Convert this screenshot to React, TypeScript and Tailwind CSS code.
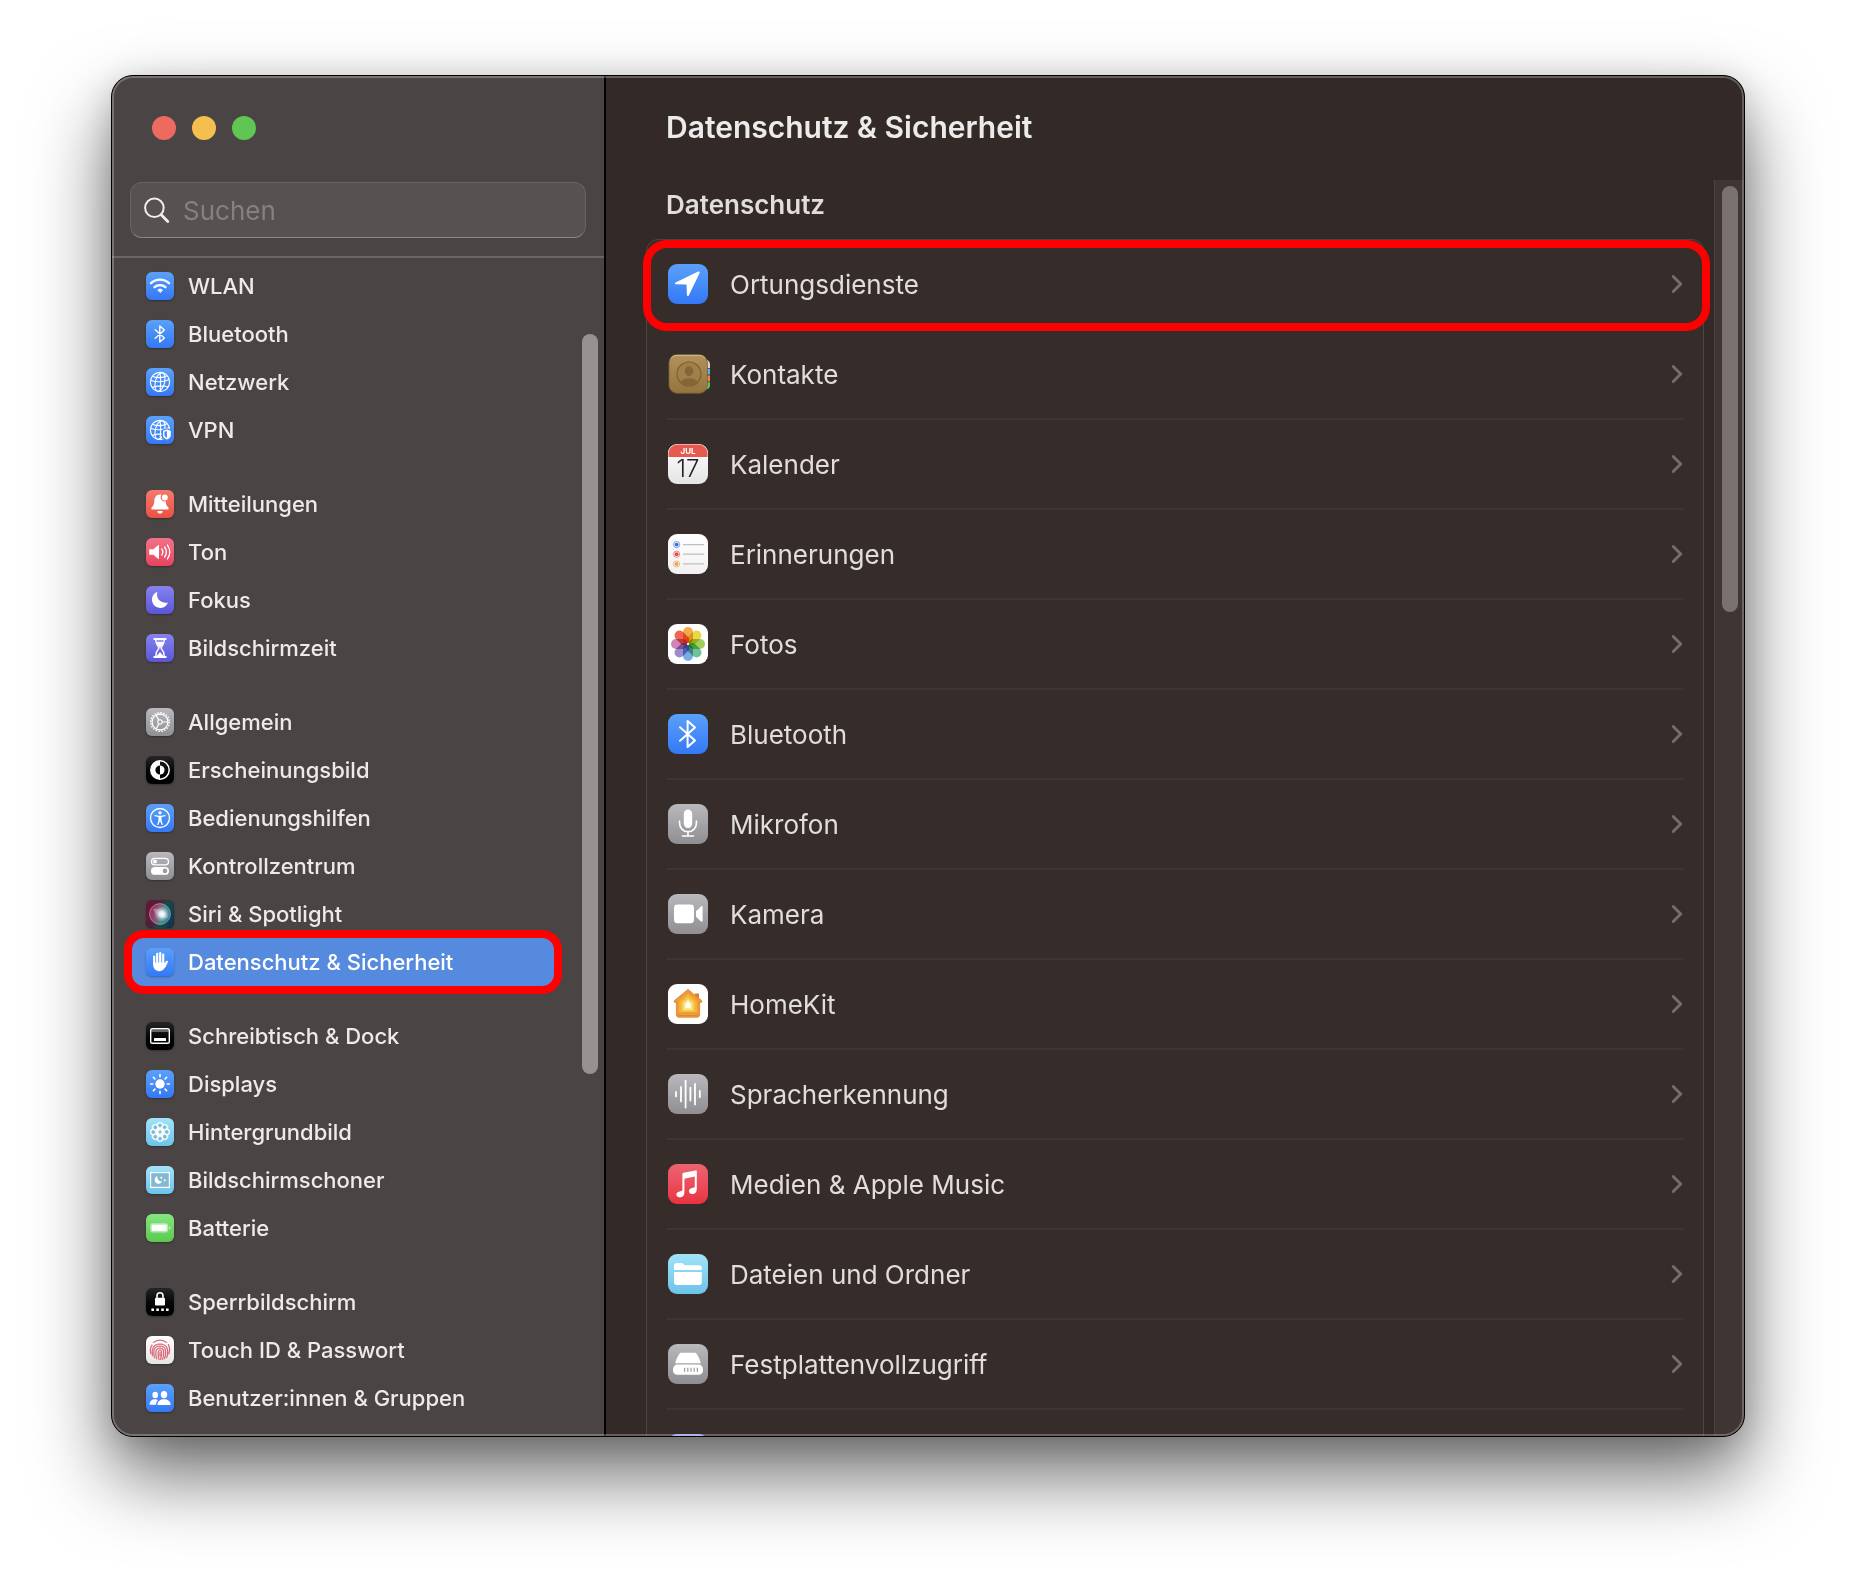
import React from 'react';
import { ChevronRight } from 'lucide-react';

const blue = 'from-[#5ba0f8] to-[#3478f6]';
const gray = 'from-[#b9b9bd] to-[#8e8e93]';
const black = 'from-[#262626] to-[#000000]';
const indigo = 'from-[#8783ee] to-[#5a56d8]';
const cyan = 'from-[#a0e4f8] to-[#6cc3ea]';
const white = 'from-[#ffffff] to-[#e4e4e4]';

const Bluetooth = () => (
  <path d="M9.2 9.8 18.4 18 13.8 22V6l4.6 4L9.2 18.2" fill="none" stroke="#fff" strokeWidth="1.4" strokeLinejoin="round" strokeLinecap="round" />
);

const Globe = () => (
  <g fill="none" stroke="#fff" strokeWidth="1.1">
    <circle cx="14" cy="14" r="9.6" />
    <ellipse cx="14" cy="14" rx="4.6" ry="9.6" transform="rotate(14 14 14)" />
    <path d="M14 4.4c1 6 1 13 0 19.2M4.6 12.2c5 2.4 14 2 18.6-.6M6.4 8.2c4 2 11 2 14.4-.4M6 19.4c4.4-2 12-2 16-.4" />
  </g>
);

/* Glyphs are drawn on a 28x28 grid */
const glyphs: Record<string, React.ReactNode> = {
  wifi: (
    <g fill="none" stroke="#fff" strokeWidth="2.4" strokeLinecap="round">
      <path d="M5 11.2a13 13 0 0 1 18 0M8.6 15.2a8 8 0 0 1 10.8 0" />
      <path d="M14 20.2l-2.2-2.2a3.2 3.2 0 0 1 4.4 0z" fill="#fff" strokeWidth="1" strokeLinejoin="round" />
    </g>
  ),
  bluetooth: <Bluetooth />,
  globe: <Globe />,
  vpn: (
    <g>
      <Globe />
      <path d="M16.4 14.4 20.8 12.8 25.4 14.4v4.6c0 2.6-2 4.2-4.6 5.2-2.6-1-4.4-2.6-4.4-5.2z" fill="#fff" stroke="#4285f6" strokeWidth="1.2" />
      <path d="M20.9 15v7c-1.6-.8-2.4-1.8-2.4-3.2v-3z" fill="#4285f6" />
    </g>
  ),
  bell: (
    <g>
      <path d="M14 4.4c-3.6 0-5.4 2.8-5.6 6-.2 3.4-.8 5.4-2.8 7.2-.6.8-.2 2 .8 2h15.2c1 0 1.4-1.2.8-2-2-1.8-2.6-3.8-2.8-7.2-.2-3.2-2-6-5.6-6z" fill="#fff" />
      <path d="M11.4 21h5.2a2.6 2.6 0 0 1-5.2 0z" fill="#fff" />
      <circle cx="18.8" cy="7.4" r="3.6" fill="#fff" stroke="#f2685a" strokeWidth="1.2" />
    </g>
  ),
  sound: (
    <g>
      <path d="M3.8 11.2h3.6L12 7.2c.6-.4 1 0 1 .6v12.4c0 .6-.4 1-1 .6l-4.6-4H3.8a.6.6 0 0 1-.6-.6v-4.4a.6.6 0 0 1 .6-.6z" fill="#fff" />
      <path d="M15.8 11a5 5 0 0 1 0 6M18.6 9a8.6 8.6 0 0 1 0 10M21.4 7a12.4 12.4 0 0 1 0 14" fill="none" stroke="#fff" strokeWidth="1.3" strokeLinecap="round" />
    </g>
  ),
  moon: <path d="M11.4 5.8c-1.8 6.8 3 12 10.6 10.8a8.3 8.3 0 1 1-10.600-10.800z" fill="#fff" />,
  hourglass: (
    <g>
      <path d="M8.2 5h11.6M8.2 23h11.6" stroke="#fff" strokeWidth="1.8" strokeLinecap="round" />
      <path d="M9.6 5.6h8.8c0 4-1.4 6-3.4 8.4 2 2.4 3.4 4.6 3.4 8.4H9.6c0-3.8 1.4-6 3.4-8.4-2-2.4-3.4-4.4-3.4-8.4z" fill="none" stroke="#fff" strokeWidth="1.3" />
      <path d="M10.4 7.8h7.2c-.4 2.2-1.6 4-3.6 6.200-2-2.200-3.200-4-3.600-6.200zM10.600 22l3.400-4 3.400 4z" fill="#fff" />
    </g>
  ),
  gear: (
    <g fill="none" stroke="#fff">
      <circle cx="14" cy="14" r="9.4" strokeWidth="1.4" strokeDasharray="1.5 1.45" />
      <circle cx="14" cy="14" r="8" strokeWidth="1.3" />
      <circle cx="14" cy="14" r="2.2" strokeWidth="1.1" />
      <path d="M16.2 14H22M12.9 12.1 10 7M12.9 15.9 10 21" strokeWidth="1.2" />
    </g>
  ),
  contrast: (
    <g>
      <circle cx="14" cy="14" r="9.2" fill="none" stroke="#fff" strokeWidth="1.5" />
      <path d="M14 4.8a9.2 9.2 0 0 0 0 18.4v-4.6a4.6 4.6 0 0 1 0-9.2z" fill="#fff" />
      <path d="M14 9.4a4.6 4.6 0 0 1 0 9.2z" fill="#fff" />
    </g>
  ),
  access: (
    <g>
      <circle cx="14" cy="14" r="9.5" fill="none" stroke="#fff" strokeWidth="1.3" />
      <circle cx="14" cy="8.8" r="1.6" fill="#fff" />
      <path d="M9 11.6 12.7 12.3h2.6L19 11.6" fill="none" stroke="#fff" strokeWidth="1.2" strokeLinecap="round" strokeLinejoin="round" />
      <path d="M12.5 12h3v4.200l1.400 4.800h-1.200L14 16.800 12.300 21h-1.200l1.400-4.800z" fill="#fff" />
    </g>
  ),
  toggles: (
    <g>
      <rect x="5.5" y="6.3" width="17" height="6.6" rx="3.3" fill="none" stroke="#fff" strokeWidth="1.3" />
      <circle cx="9" cy="9.6" r="2" fill="#fff" />
      <rect x="5" y="15" width="18" height="7.8" rx="3.9" fill="#fff" />
      <circle cx="19" cy="18.9" r="2.3" fill="#9b9b9f" />
    </g>
  ),
  siri: (
    <g>
      <defs>
        <radialGradient id="siriCore" cx="0.6" cy="0.5" r="0.42">
          <stop offset="0" stopColor="#ffffff" />
          <stop offset="0.3" stopColor="#eef6f6" stopOpacity="0.9" />
          <stop offset="1" stopColor="#8fb8c0" stopOpacity="0" />
        </radialGradient>
        <linearGradient id="siriBack" x1="0" y1="0.3" x2="1" y2="0.7">
          <stop offset="0" stopColor="#6c1232" />
          <stop offset="0.4" stopColor="#4a2340" />
          <stop offset="0.6" stopColor="#1c4a48" />
          <stop offset="1" stopColor="#123452" />
        </linearGradient>
        <linearGradient id="siriOrb" x1="0" y1="0.4" x2="1" y2="0.7">
          <stop offset="0" stopColor="#c02a62" />
          <stop offset="0.4" stopColor="#a5678a" />
          <stop offset="0.65" stopColor="#4ba59c" />
          <stop offset="1" stopColor="#2a7ad0" />
        </linearGradient>
      </defs>
      <rect width="28" height="28" rx="6" fill="url(#siriBack)" />
      <circle cx="14" cy="14" r="10.4" fill="url(#siriOrb)" fillOpacity="0.75" stroke="#93a4a8" strokeWidth="0.8" />
      <path d="M7 9c5-1 11 1 15 8-5 3-11 0-15-8z" fill="#fff" opacity="0.3" />
      <circle cx="14" cy="14" r="10" fill="url(#siriCore)" />
    </g>
  ),
  hand: (
    <g fill="none" stroke="#fff" strokeLinecap="round">
      <path d="M8.200 8.600v8M11.200 5.800v9M14.200 5v10M17.200 6.600v9" strokeWidth="2.200" />
      <path d="M20.800 13.800 18.400 18.800" strokeWidth="2.200" />
      <path d="M7.200 14.400h10.800l2 2.200c-1.200 3.800-2.800 6.600-6.600 6.600-4.200 0-6.200-2.800-6.200-6.600z" fill="#fff" stroke="none" />
    </g>
  ),
  dock: (
    <g>
      <rect x="4.7" y="6.7" width="18.6" height="14.6" rx="1.6" fill="none" stroke="#fff" strokeWidth="1.4" />
      <path d="M5 9h18" stroke="#bbb" strokeWidth="1" />
      <rect x="8" y="16" width="12" height="3" rx="0.6" fill="#fff" />
    </g>
  ),
  sun: (
    <g>
      <circle cx="14" cy="14" r="4.7" fill="#fff" />
      <path d="M14 4.6v2.2M14 21.2v2.2M4.6 14h2.2M21.2 14h2.2M7.4 7.4l1.5 1.5M19.1 19.1l1.5 1.5M7.4 20.6l1.5-1.5M19.1 8.9l1.5-1.5" stroke="#fff" strokeWidth="1.6" strokeLinecap="round" />
    </g>
  ),
  flower: (
    <g>
      {[0, 45, 90, 135, 180, 225, 270, 315].map((a) => (
        <circle key={a} cx="14" cy="7.4" r="2.7" fill="#7fb9d0" stroke="#fff" strokeWidth="1.5" transform={`rotate(${a} 14 14)`} opacity="0.85" />
      ))}
      <circle cx="14" cy="14" r="4.6" fill="#fff" opacity="0.85" />
      <circle cx="14" cy="14" r="1.4" fill="#7fb9d0" />
    </g>
  ),
  saver: (
    <g>
      <rect x="4.6" y="6.6" width="18.8" height="14.8" fill="#82b9d2" stroke="#fff" strokeWidth="1.2" />
      <path d="M11.4 10a4 4 0 1 0 4.8 5.6 4.6 4.6 0 0 1-4.800-5.600zM15.200 10l.5 1.200 1.200.5-1.200.5-.5 1.200-.5-1.200-1.200-.5 1.200-.5zM18.800 12.600l.5 1.200 1.200.5-1.200.5-.5 1.200-.5-1.200-1.200-.5 1.200-.5z" fill="#fff" />
    </g>
  ),
  battery: (
    <g>
      <rect x="4.2" y="9.2" width="18" height="9.2" rx="2.4" fill="#fff" opacity="0.5" />
      <rect x="5.8" y="10.8" width="14.8" height="6" rx="1.2" fill="#fff" />
      <path d="M23.2 12.2c2 .6 2 2.800 0 3.400z" fill="#fff" opacity="0.6" />
    </g>
  ),
  lock: (
    <g>
      <rect x="9" y="9.8" width="10" height="7.8" rx="1.4" fill="#fff" />
      <path d="M11 10V7.8a3 3 0 0 1 6 0V10" fill="none" stroke="#fff" strokeWidth="1.6" />
      <path d="M5.4 20.4h2.6v2.6H5.4zM10.3 20.4h2.6v2.6h-2.6zM15.2 20.4h2.6v2.6h-2.6zM20 20.4h2.6v2.6H20z" fill="#fff" />
    </g>
  ),
  touch: (
    <g fill="none" stroke="#dc6577" strokeWidth="1.2" strokeLinecap="round">
      <path d="M7.4 6.400a10.400 10.400 0 0 1 13.200 0M4.800 17.600c-.8-3.200-.4-6 1.200-8.400M22.400 8.600c1.600 3 1.400 6.400.6 9.200M6.400 19.600c-1-5.600.4-11.400 7.600-11.600 6.600 0 8.600 5 7.400 11.400-.2 1-.6 1.600-1 2.200M8.400 21.600c-1.600-6-.8-11.400 5.600-11.600 5.400 0 6.400 4.800 5.400 9.600-.2 1.200-.6 2.200-1.200 3.200M10.600 22.800c-1.200-4-2-10.600 3.400-10.800 4 0 4.200 4.200 3.400 8-.2 1.200-.6 2.400-1.200 3.400M13 23.600c-.8-2.600-1.800-9.400 1-9.600 2.400 0 1.800 5.400.4 9.400M14 16.400v3.600" />
    </g>
  ),
  users: (
    <g fill="#fff">
      <ellipse cx="9.2" cy="11" rx="2.8" ry="3.2" />
      <path d="M3.6 20.6c0-3.4 2.4-5.4 5.4-5.4 1.2 0 2.2.2 3 .8-1.2 1.2-1.8 2.600-1.900 4.800H4.400c-.6 0-.8 0-.8-.2z" />
      <ellipse cx="18" cy="10.6" rx="3.2" ry="3.6" />
      <path d="M11.4 20.6c0-3.4 3-5.4 6.6-5.4s6.6 2 6.6 5.4c0 .2-.2.4-.6.4H12c-.4 0-.6-.2-.6-.4z" />
    </g>
  ),
};

/* Glyphs of the privacy list are drawn on a 40x40 grid */
const bigGlyphs: Record<string, React.ReactNode> = {
  location: <path d="M30.2 7.6 7.6 18.4c-1 .6-.8 1.8.4 1.9l10 .3c.4 0 .6.2.6.6l.3 9.8c0 1.2 1.3 1.4 1.9.4L31.6 9c.5-1-.4-1.9-1.400-1.400z" fill="#fff" />,
  contacts: (
    <g>
      <defs>
        <linearGradient id="leather" x1="0" y1="0" x2="0" y2="1">
          <stop offset="0" stopColor="#b2915a" />
          <stop offset="1" stopColor="#94743f" />
        </linearGradient>
      </defs>
      <path d="M36 5.4c4 0 6 2 6 5V14H36z" fill="#d8d4cf" />
      <path d="M36 14.6h6v6H36z" fill="#5aaee8" />
      <path d="M36 21.4h6v6H36z" fill="#ee8a35" />
      <path d="M36 28.2h6v3.6c0 2-2 4-6 4.4z" fill="#62c466" />
      <rect x="1" y="0.8" width="38.4" height="38.4" rx="8" fill="url(#leather)" stroke="#7a6038" strokeWidth="0.8" />
      <path d="M3 4.4c1.200-2 3.200-3 6-3h22c2.800 0 4.800 1 6 3" fill="none" stroke="#d6bd8d" strokeWidth="1" />
      <circle cx="21" cy="20" r="12" fill="#a17f49" stroke="#7d6034" strokeWidth="1.2" />
      <ellipse cx="21" cy="17.2" rx="4.2" ry="5" fill="#856538" />
      <path d="M12.4 28.2c1.6-3 4.8-4 8.600-4s7 1 8.600 4c-4.600 5-12.600 5-17.200 0z" fill="#856538" />
    </g>
  ),
  calendar: (
    <g>
      <path d="M.5 13V9.500a9 9 0 0 1 9-9h21a9 9 0 0 1 9 9V13z" fill="#e5594f" />
      <text x="20" y="10" textAnchor="middle" fontSize="8" fontWeight="700" fill="#fff">JUL</text>
      <text x="20" y="33" textAnchor="middle" fontSize="24" fontWeight="300" fill="#222">17</text>
    </g>
  ),
  reminders: (
    <g>
      <path d="M15 10.6h21M15 20.2h21M15 29.9h21" stroke="#bfbfc2" strokeWidth="1.2" />
      {[['#2f6fe4', 10.6], ['#e04a3f', 20.2], ['#eba04d', 29.9]].map(([c, y]) => (
        <g key={c}>
          <circle cx="8.6" cy={y} r="3.1" fill="none" stroke={c as string} strokeWidth="0.9" opacity="0.7" />
          <circle cx="8.6" cy={y} r="1.9" fill={c as string} />
        </g>
      ))}
    </g>
  ),
  photos: (
    <g>
      {['#f39a2d', '#e6d329', '#8fc740', '#58b788', '#5e9fe0', '#8c77c6', '#c66fae', '#ea4f38'].map((c, i) => (
        <rect key={c} x="15" y="3" width="10" height="16.4" rx="5" fill={c} opacity="0.85" style={{ mixBlendMode: 'multiply' }} transform={`rotate(${i * 45} 20 20)`} />
      ))}
      <circle cx="20" cy="20" r="1" fill="#fff" />
    </g>
  ),
  bluetooth: <path d="M12 13.2 27 26.4 19.6 33V7L27 13.6 12 26.8" fill="none" stroke="#fff" strokeWidth="2" strokeLinejoin="round" strokeLinecap="round" />,
  mic: (
    <g>
      <rect x="15.8" y="5.6" width="8.4" height="18.4" rx="4.2" fill="#fff" />
      <path d="M11.6 17v2.4a8.4 8.4 0 0 0 16.8 0V17M20 27.8v4M14.4 32h11.2" fill="none" stroke="#fff" strokeWidth="1.6" strokeLinecap="round" />
    </g>
  ),
  camera: (
    <g fill="#fff">
      <rect x="6" y="10.6" width="20" height="18.6" rx="3.4" />
      <path d="M28 17.2 33 12.4c.8-.6 1.6-.2 1.6.6v13.800c0 .8-.8 1.200-1.600.6L28 22.800z" />
    </g>
  ),
  home: (
    <g>
      <path d="M27 9.6h4V16l-4-3.4z" fill="#d9822b" />
      <path d="M20 5.4 33.6 16.6c1 .8.2 1.800-.8 1.800H31.600V31c0 1.400-.8 2.200-2.200 2.200H10.600c-1.400 0-2.200-.8-2.200-2.200V18.400H7.200c-1 0-1.800-1-.8-1.800z" fill="#ee9a38" stroke="#d9822b" strokeWidth="0.8" />
      <path d="M20 9.4 29 17v13.2H11V17z" fill="#f3b03c" />
      <path d="M20 12.4 26.6 18v9.8H13.4V18z" fill="#f6cb48" />
      <path d="M20 15 24.6 19v7h-9.2v-7z" fill="#fae588" />
      <path d="M20 17.6 22.6 20v3.8h-5.2V20z" fill="#fff" />
      <path d="M10.6 29h18.8M9.6 31.4h20.8" stroke="#d9822b" strokeWidth="0.7" />
    </g>
  ),
  wave: <path d="M8 18v4.4M13 13v14.4M17.6 6.6v27M22.4 13.6v13M27 10v20.6M31.8 17v6" stroke="#fff" strokeWidth="1.8" strokeLinecap="round" />,
  music: (
    <g fill="#fff">
      <path d="M14.4 10.400c0-.8.4-1.400 1.200-1.600l12-2.400c.8-.2 1.200.2 1.200 1v17c0 4.400-2.400 5.600-4.600 5.600-2 0-3.200-1.200-3.200-2.800 0-1.800 1.200-2.800 3-3.200l1.800-.4c.8-.2 1-.6 1-1.200V12.600l-10.400 2.200v13c0 4-2 5.600-4.600 5.600-2.200 0-3.400-1.200-3.400-2.800 0-1.800 1.200-2.800 3.200-3.200l1.600-.4c.8-.2 1.200-.6 1.200-1.200z" />
    </g>
  ),
  folder: (
    <g fill="#fff">
      <path d="M6 16v-4.2C6 9.8 7.2 9 9 9h4c1.6 0 2 .6 3 1.4.6.6 1.2.8 2.2.8H31c1.8 0 2.8 1 2.8 2.8v2z" />
      <path d="M6 18h27.8v10.2c0 1.8-1 2.8-2.800 2.800H9c-1.800 0-3-1-3-2.800z" />
    </g>
  ),
  disk: (
    <g>
      <path d="M11.6 9.4c.4-.4.8-.6 1.6-.6h13.6c.8 0 1.2.2 1.6.6 1.6 2 3.6 6.4 4.400 9.800H7.200c.8-3.400 2.800-7.800 4.400-9.800z" fill="#fff" />
      <rect x="5" y="20.6" width="30" height="10.2" rx="4.4" fill="#fff" />
      <path d="M16.6 23.8v4M19.8 23.8v4M23 23.8v4M26.2 23.8v4M29.4 23.8v4" stroke="#9a9a9e" strokeWidth="1.2" />
    </g>
  ),
};

const groups = [
  [
    { label: 'WLAN', glyph: 'wifi', tint: blue },
    { label: 'Bluetooth', glyph: 'bluetooth', tint: blue },
    { label: 'Netzwerk', glyph: 'globe', tint: blue },
    { label: 'VPN', glyph: 'vpn', tint: blue },
  ],
  [
    { label: 'Mitteilungen', glyph: 'bell', tint: 'from-[#f47a6c] to-[#ea5042]' },
    { label: 'Ton', glyph: 'sound', tint: 'from-[#f0738a] to-[#e8415f]' },
    { label: 'Fokus', glyph: 'moon', tint: indigo },
    { label: 'Bildschirmzeit', glyph: 'hourglass', tint: indigo },
  ],
  [
    { label: 'Allgemein', glyph: 'gear', tint: gray },
    { label: 'Erscheinungsbild', glyph: 'contrast', tint: black },
    { label: 'Bedienungshilfen', glyph: 'access', tint: blue },
    { label: 'Kontrollzentrum', glyph: 'toggles', tint: gray },
    { label: 'Siri & Spotlight', glyph: 'siri', tint: black },
    { label: 'Datenschutz & Sicherheit', glyph: 'hand', tint: blue },
  ],
  [
    { label: 'Schreibtisch & Dock', glyph: 'dock', tint: black },
    { label: 'Displays', glyph: 'sun', tint: blue },
    { label: 'Hintergrundbild', glyph: 'flower', tint: cyan },
    { label: 'Bildschirmschoner', glyph: 'saver', tint: cyan },
    { label: 'Batterie', glyph: 'battery', tint: 'from-[#86e67e] to-[#5bc84f]' },
  ],
  [
    { label: 'Sperrbildschirm', glyph: 'lock', tint: black },
    { label: 'Touch ID & Passwort', glyph: 'touch', tint: white },
    { label: 'Benutzer:innen & Gruppen', glyph: 'users', tint: blue },
  ],
];

const services = [
  { label: 'Ortungsdienste', glyph: 'location', tint: blue },
  { label: 'Kontakte', glyph: 'contacts', tint: '' },
  { label: 'Kalender', glyph: 'calendar', tint: white },
  { label: 'Erinnerungen', glyph: 'reminders', tint: 'from-white to-[#f1f1f1]' },
  { label: 'Fotos', glyph: 'photos', tint: 'from-white to-white' },
  { label: 'Bluetooth', glyph: 'bluetooth', tint: blue },
  { label: 'Mikrofon', glyph: 'mic', tint: gray },
  { label: 'Kamera', glyph: 'camera', tint: gray },
  { label: 'HomeKit', glyph: 'home', tint: 'from-white to-white' },
  { label: 'Spracherkennung', glyph: 'wave', tint: gray },
  { label: 'Medien & Apple Music', glyph: 'music', tint: 'from-[#ee6274] to-[#e8323f]' },
  { label: 'Dateien und Ordner', glyph: 'folder', tint: cyan },
  { label: 'Festplattenvollzugriff', glyph: 'disk', tint: gray },
];

function App() {
  const active = 'Datenschutz & Sicherheit';

  return (
    <div className="h-screen bg-white px-[111px] pt-[75px] pb-[147px] font-['Inter','Liberation_Sans',sans-serif] overflow-hidden">
      {/* Window */}
      <div className="relative flex h-full rounded-[22px] border border-black bg-[#332a28] overflow-hidden shadow-[0_38px_78px_rgba(0,0,0,0.58),0_6px_30px_rgba(0,0,0,0.15)]">
        {/* Sidebar */}
        <aside className="relative flex w-[494px] shrink-0 flex-col border-r-2 border-black bg-[#4a4444]">
          <div className="flex gap-4 px-10 pt-10">
            <button aria-label="Schließen" className="h-6 w-6 rounded-full bg-[#ec6a5e]" />
            <button aria-label="Minimieren" className="h-6 w-6 rounded-full bg-[#f4bf4f]" />
            <button aria-label="Vergrößern" className="h-6 w-6 rounded-full bg-[#61c554]" />
          </div>

          <div className="border-b-2 border-[#6b6665] px-[18px] pt-[42px] pb-[18px]">
            <label className="flex h-14 items-center gap-3 rounded-xl border border-[#696463] border-b-[#8b8786] bg-[#575151] px-3">
              <svg className="h-7 w-7 shrink-0" viewBox="0 0 28 28" fill="none" stroke="#f0eeee" strokeLinecap="round">
                <circle cx="11.4" cy="11.8" r="9.3" strokeWidth="2" />
                <path d="M18.2 18.8 24.8 25.4" strokeWidth="2.8" />
              </svg>
              <input
                type="text"
                aria-label="Suchen"
                placeholder="Suchen"
                className="min-w-0 flex-1 bg-transparent text-[26px] text-white outline-none placeholder:text-[#868180]"
              />
            </label>
          </div>

          <nav className="flex min-h-0 flex-1 flex-col gap-[26px] overflow-hidden pt-1 pl-5 pr-[50px]">
            {groups.map((group) => (
              <ul key={group[0].label}>
                {group.map((item) => (
                  <li key={item.label}>
                    <a
                      href="#"
                      className={`flex h-12 items-center gap-[14px] rounded-xl pl-[14px] text-[22px] font-medium whitespace-nowrap ${
                        item.label === active ? 'bg-[#568adf] text-white ring-8 ring-[#ff0000]' : 'text-[#eceaea]'
                      }`}
                    >
                      <span className={`h-7 w-7 rounded-md bg-linear-to-b shadow-[0_1px_2px_rgba(0,0,0,0.3)] ${item.tint}`}>
                        <svg viewBox="0 0 28 28" className="h-7 w-7">{glyphs[item.glyph]}</svg>
                      </span>
                      {item.label}
                    </a>
                  </li>
                ))}
              </ul>
            ))}
          </nav>

          {/* Scroll thumb */}
          <div className="absolute top-[258px] right-[6px] h-[740px] w-4 rounded-full bg-[#979291]" />
        </aside>

        {/* Content */}
        <main className="flex min-w-0 flex-1 flex-col">
          <h1 className="px-[60px] pt-[33px] text-[30px] leading-9 font-semibold text-[#eceaea]">Datenschutz & Sicherheit</h1>
          <div className="mt-[35px] flex min-h-0 flex-1 overflow-hidden">
            <section className="min-w-0 flex-1 pr-[10px] pl-10">
              <h2 className="px-5 pt-[9px] pb-[18px] text-[26px] leading-8 font-semibold text-[#e0dddc]">Datenschutz</h2>
              <div className="relative rounded-[12px] border border-[#4d4543] bg-[#362c2a] px-[19px]">
                <div className="pointer-events-none absolute top-0 -right-[7px] -left-1 h-[91px] rounded-[24px] border-8 border-[#ff0000]" />
                <ul>
                  {services.map((item) => (
                    <li key={item.label} className="border-b-2 border-[#3e3533]">
                      <a href="#" className="flex h-[88px] items-center pl-0.5 text-[26px] text-[#e0dddc]">
                        <span className={`h-10 w-10 rounded-[9px] bg-linear-to-b ${item.tint}`}>
                          <svg viewBox="0 0 40 40" className="h-10 w-10 overflow-visible">{bigGlyphs[item.glyph]}</svg>
                        </span>
                        <span className="ml-[22px] flex-1 truncate">{item.label}</span>
                        <ChevronRight className="-mr-2 h-[30px] w-[30px] text-[#746d6b]" strokeWidth={2.4} />
                      </a>
                    </li>
                  ))}
                  <li className="flex h-[88px] items-center pl-0.5">
                    <span className="h-10 w-10 rounded-[9px] bg-linear-to-b from-[#9d9af0] to-[#5a56d8]" />
                  </li>
                </ul>
              </div>
            </section>
            <div className="w-[30px] shrink-0 border-l border-[#4d4442] bg-[#3f3533] pt-[6px] pl-[7px]">
              <div className="h-[426px] w-4 rounded-full bg-[#7a7270]" />
            </div>
          </div>
        </main>

        {/* Light inner edge */}
        <div className="pointer-events-none absolute inset-0 rounded-[21px] border-2 border-white/25" />
      </div>
    </div>
  );
}

export default App;
